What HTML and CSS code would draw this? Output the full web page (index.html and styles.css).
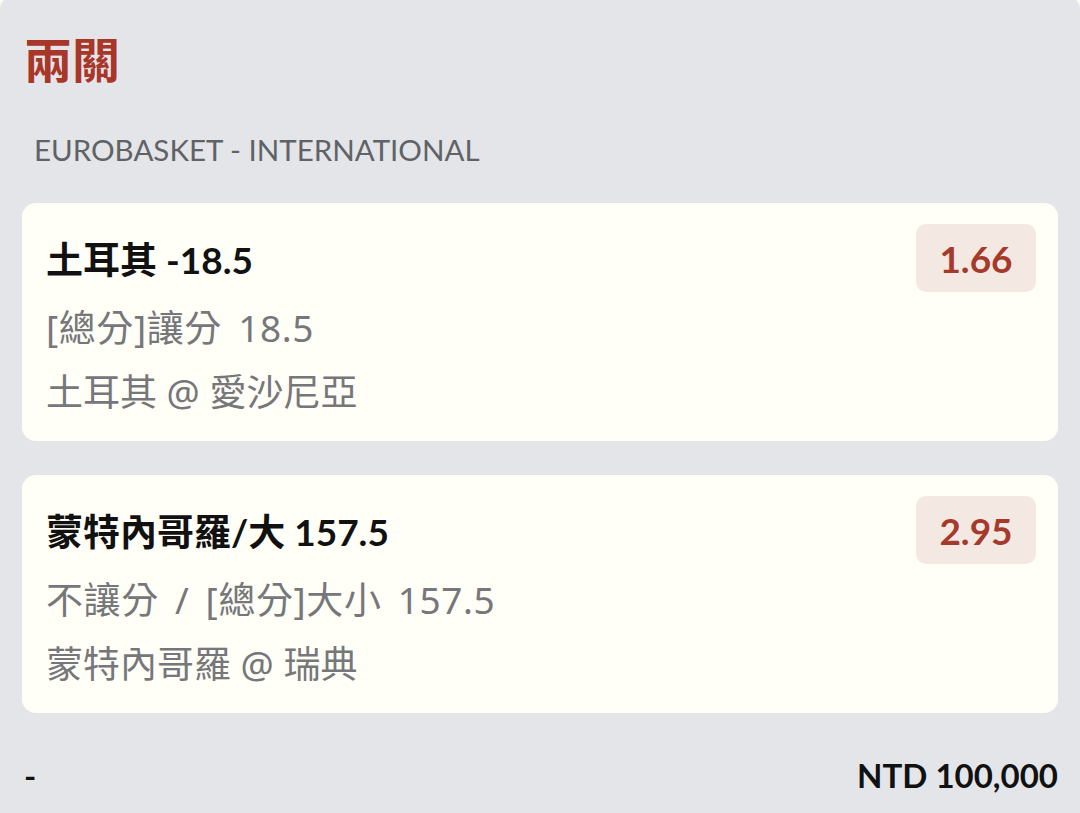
FILE: index.html
```html
<!DOCTYPE html>
<html lang="zh-Hant">

<head>
    <meta charset="UTF-8">
    <meta name="viewport" content="width=device-width, initial-scale=1.0">
    <title>兩關</title>
    <link rel="stylesheet" href="styles.css">
</head>

<body>
    <div class="panel">
        <h1 class="bet-type">兩關</h1>
        <div class="league">EUROBASKET - INTERNATIONAL</div>

        <div class="leg">
            <div class="leg-head">
                <div class="pick">土耳其 -18.5</div>
                <div class="odds">1.66</div>
            </div>
            <p class="market">[總分]讓分 18.5</p>
            <p class="match">土耳其 @ 愛沙尼亞</p>
        </div>

        <div class="leg">
            <div class="leg-head">
                <div class="pick">蒙特內哥羅/大 157.5</div>
                <div class="odds">2.95</div>
            </div>
            <p class="market">不讓分 / [總分]大小 157.5</p>
            <p class="match">蒙特內哥羅 @ 瑞典</p>
        </div>

        <div class="summary">
            <span class="dash">-</span>
            <span class="stake">NTD 100,000</span>
        </div>
    </div>
</body>

</html>
```

FILE: styles.css
```css
/* ticket detail */
body {
    margin: 0;
    background-color: #fdfcf2;
    font-family: Lato, "Noto Sans CJK TC", sans-serif;
    overflow: hidden;
}

.panel {
    box-sizing: border-box;
    height: 815px;
    margin-top: -2px;
    background-color: #e4e5e8;
    border-top-left-radius: 10px;
    border-top-right-radius: 10px;
    padding: 30px 22px 0 22px;
}

.bet-type {
    margin: 0 0 0 2px;
    font-size: 48px;
    line-height: 64px;
    font-weight: 700;
    color: #a83629;
}

.league {
    margin: 36px 0 0 12px;
    font-size: 29.5px;
    line-height: 44px;
    color: #5f6266;
}

.leg {
    background-color: #fffef7;
    border-radius: 14px;
    padding: 21px 22px 17px 24px;
    margin-top: 31px;
}

.leg + .leg {
    margin-top: 34px;
}

.leg-head {
    display: flex;
    justify-content: space-between;
    align-items: center;
}

.pick {
    font-size: 37px;
    font-weight: 700;
    color: #111111;
}

.odds {
    width: 120px;
    height: 68px;
    display: flex;
    align-items: center;
    justify-content: center;
    background-color: #f4e8e3;
    border-radius: 10px;
    font-size: 37px;
    font-weight: 700;
    color: #a53a2c;
}

.market,
.match {
    margin: 0;
    font-family: "Noto Sans", "Noto Sans CJK TC", sans-serif;
    font-size: 37px;
    line-height: 64px;
    color: #76777a;
}

.market {
    margin-top: 4px;
    word-spacing: 6px;
    letter-spacing: 0.6px;
}

.summary {
    display: flex;
    justify-content: space-between;
    align-items: center;
    margin-top: 40px;
    font-size: 33px;
    font-weight: 700;
    color: #111111;
    line-height: 44px;
}

.dash {
    margin-left: 2px;
}
```
